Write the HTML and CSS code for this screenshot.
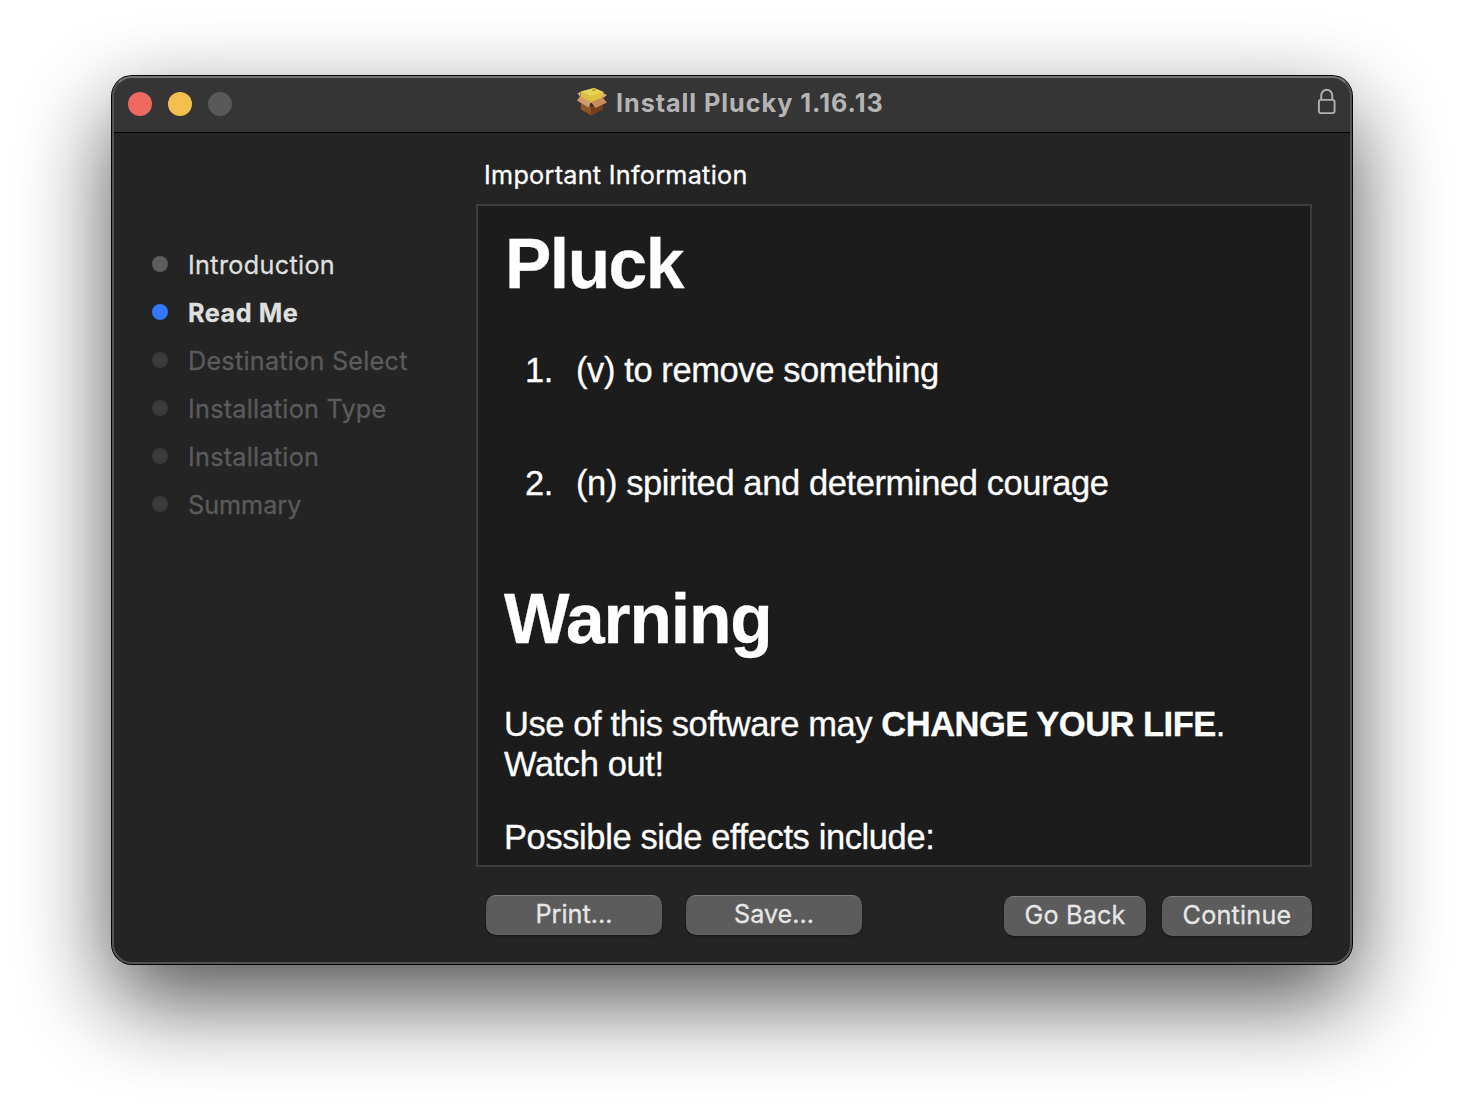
FILE: index.html
```html
<!DOCTYPE html>
<html lang="en">
<head>
<meta charset="utf-8">
<title>Install Plucky 1.16.13</title>
<link rel="stylesheet" href="styles.css">
</head>
<body>
<main class="window">
  <header class="titlebar">
    <div class="lights">
      <span class="light close"></span>
      <span class="light minimize"></span>
      <span class="light zoom"></span>
    </div>
    <div class="title">
      <svg class="package" width="32" height="30" viewBox="0 0 32 30" aria-hidden="true">
        <path d="M5 14 15.5 20V28.500L5 22.500Z" fill="#8d5526"/>
        <path d="M15.500 20 27 14V22.500L15.500 28.500Z" fill="#744019"/>
        <path d="M5 4.500 18 1 27.500 5 26 12 14.500 16 4 11Z" fill="#d9bd45"/>
        <path d="M5 4.500 18 1 27.500 5 14.500 9Z" fill="#e6d35a"/>
        <path d="M14.500 9 27.500 5 26 12 14.500 15.500Z" fill="#dcc440"/>
        <path d="M4 9.500 15 15 12.500 20.500 1 13.500Z" fill="#d29a68"/>
        <path d="M15 15 26.500 10.500 31 15.500 19.500 21Z" fill="#c88d5b"/>
        <path d="M27 6 31 8 26.500 11.500Z" fill="#dba977"/>
        <path d="M5 4.500 1.500 6.500 4 9.500Z" fill="#dba977"/>
        <path d="M17 1.500 20 2.500 18 4.500 16 3.500Z" fill="#a99f2c"/>
      </svg>
      <h1 class="title-text">Install Plucky 1.16.13</h1>
    </div>
    <svg class="lock" width="20" height="27" viewBox="0 0 20 27" fill="none" stroke="#b0b0b0" stroke-width="1.900" aria-hidden="true">
      <rect x="1.900" y="11.900" width="15.700" height="13.200" rx="2"/>
      <path d="M4.250 11.500V7.500a5.500 5.700 0 0 1 11 0v4"/>
    </svg>
  </header>
  <div class="content">
    <ol class="steps">
      <li class="step done">Introduction</li>
      <li class="step current">Read Me</li>
      <li class="step">Destination Select</li>
      <li class="step">Installation Type</li>
      <li class="step">Installation</li>
      <li class="step summary">Summary</li>
    </ol>
    <section class="pane">
      <h2 class="heading">Important Information</h2>
      <article class="readme">
        <h3 class="word">Pluck</h3>
        <div class="definition"><span class="number">1.</span><span>(v) to remove something</span></div>
        <div class="definition"><span class="number">2.</span><span>(n) spirited and determined courage</span></div>
        <h3 class="warning">Warning</h3>
        <p class="para">Use of this software may <b>CHANGE YOUR LIFE</b>.<br>Watch out!</p>
        <p class="para">Possible side effects include:</p>
      </article>
      <footer class="actions">
        <button class="button wide">Print...</button>
        <button class="button wide">Save...</button>
        <button class="button back">Go Back</button>
        <button class="button next">Continue</button>
      </footer>
    </section>
  </div>
</main>
</body>
</html>
```
FILE: styles.css
```css
* { box-sizing: border-box; }
body {
  margin: 0;
  padding: 76px 112px;
  height: 1112px;
  overflow: hidden;
  background: #fff;
  font-family: Inter, sans-serif;
  font-size: 25.2px;
}
h1, h2, h3, p, ol { margin: 0; padding: 0; font-weight: 400; font-size: inherit; }
.window {
  position: relative;
  display: flex;
  flex-direction: column;
  width: 1240px;
  height: 888px;
  border-radius: 20px;
  background: #242424;
  box-shadow: 0 0 0 1px #050505, 0 36px 92px rgba(0, 0, 0, .69);
}
/* Light rim drawn over the window edge */
.window::after {
  content: "";
  position: absolute;
  inset: 0;
  border: 2px solid #535353;
  border-top-color: #757575;
  border-radius: 20px;
  pointer-events: none;
}
.titlebar {
  display: flex;
  align-items: center;
  height: 57px;
  padding: 0 16px;
  background: #353535;
  border-bottom: 1px solid #000;
  border-radius: 20px 20px 0 0;
}
.lights { display: flex; gap: 16px; width: 448px; }
.light { width: 24px; height: 24px; border-radius: 50%; }
.close { background: #ed6a5e; }
.minimize { background: #f5bf4f; }
.zoom { background: #585858; }
.title { display: flex; align-items: center; gap: 8px; flex: 1; }
.package { margin-top: -4px; }
.title-text {
  margin-top: -2px;
  color: #b4b4b4;
  font-weight: 700;
  line-height: 32px;
  letter-spacing: .95px;
}
.title-text { white-space: nowrap; }
.lock { margin: -6px -1px 0 0; }
.content { display: flex; flex: 1; }
.steps { width: 364px; padding: 108px 0 0 40px; list-style: none; }
.step {
  display: flex;
  align-items: center;
  gap: 20px;
  height: 48px;
  color: #5b5b5b;
  letter-spacing: .25px;
  white-space: nowrap;
  -webkit-text-stroke: .3px;
}
.step::before {
  content: "";
  width: 16px;
  height: 16px;
  margin-top: -2px;
  border-radius: 50%;
  background: #3a3a3a;
}
.done, .current { color: #dfdfdf; }
.done { letter-spacing: .33px; }
.done::before { background: #5e5e5e; }
.current { font-weight: 700; letter-spacing: .55px; }
.current::before { background: #3478f6; }
.summary { letter-spacing: 0; }
.pane { width: 836px; padding-top: 24px; }
.heading {
  height: 47px;
  padding-left: 8px;
  color: #fff;
  line-height: 36px;
  letter-spacing: .28px;
  -webkit-text-stroke: .3px;
}
.readme {
  height: 663px;
  padding: 18px 26px 0;
  overflow: hidden;
  border: 2px solid #3c3c3c;
  background: #1c1c1c;
  color: #fff;
  font-family: "Liberation Sans", Arial, sans-serif;
  font-size: 34.5px;
  line-height: 40px;
  letter-spacing: -.4px;
  white-space: nowrap;
  -webkit-text-stroke: .3px;
}
.word, .warning {
  font-size: 69.5px;
  line-height: 80px;
  font-weight: 700;
  letter-spacing: -1.1px;
}
.word { letter-spacing: -1.5px; padding-left: 1px; }
.definition { display: flex; margin-top: 46px; }
.definition + .definition { margin-top: 73px; }
.number { width: 49px; margin-right: 23px; text-align: right; }
.warning { margin-top: 76px; }
.para { margin-top: 45px; }
.para b { letter-spacing: -.5px; }
.para + .para { margin-top: 33px; }
.actions { display: flex; padding: 28px 0 0 10px; }
.button {
  height: 40px;
  padding: 0 0 2px;
  border: 0;
  border-radius: 10px;
  background: #5c5c5c;
  box-shadow: inset 0 2px 0 -1px #7b7b7b, 0 1px 2px rgba(0, 0, 0, .45);
  color: #e6e6e6;
  font: 25.2px/38px Inter, sans-serif;
  -webkit-text-stroke: .3px;
}
.wide { width: 176px; margin-right: 24px; }
.back { width: 142px; margin: 1px 16px 0 118px; letter-spacing: .2px; }
.next { width: 150px; margin-top: 1px; letter-spacing: .2px; }
```
